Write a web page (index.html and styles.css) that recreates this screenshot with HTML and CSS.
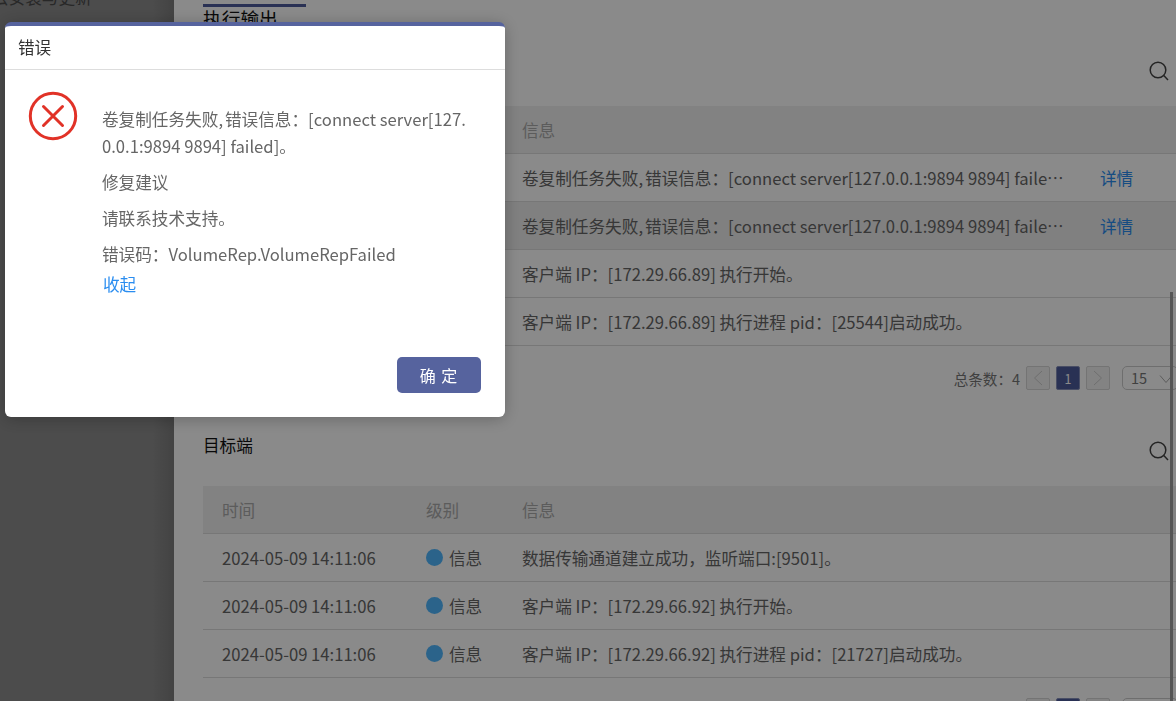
FILE: index.html
```html
<!DOCTYPE html>
<html lang="zh-CN">
<head>
	<meta charset="UTF-8">
	<title>执行输出</title>
	<link rel="stylesheet" href="styles.css">
</head>
<body>
	<div class="layout">
		<div class="side">
			<p class="side-item">云安装与更新</p>
		</div>
		<div class="main">
			<div class="tab">执行输出</div>

			<div class="sec-head">
				<span class="sec-title"></span>
				<svg class="search" width="20" height="20" viewBox="0 0 20 20"><circle cx="9" cy="9" r="7.8"/><path d="M14.8 14.6 L19 19"/></svg>
			</div>
			<table class="log">
				<colgroup><col class="c-time"><col class="c-level"><col class="c-info"><col></colgroup>
				<thead>
					<tr><th>时间</th><th>级别</th><th>信息</th><th></th></tr>
				</thead>
				<tbody>
					<tr>
						<td>2024-05-09 14:11:08</td>
						<td><span class="dot err"></span>错误</td>
						<td class="info">卷复制任务失败<span class="comma">,</span>错误信息：[connect server[127.0.0.1:9894 9894] failed]。</td>
						<td><a class="link">详情</a></td>
					</tr>
					<tr class="hover">
						<td>2024-05-09 14:11:08</td>
						<td><span class="dot err"></span>错误</td>
						<td class="info">卷复制任务失败<span class="comma">,</span>错误信息：[connect server[127.0.0.1:9894 9894] failed]。</td>
						<td><a class="link">详情</a></td>
					</tr>
					<tr>
						<td>2024-05-09 14:11:06</td>
						<td><span class="dot"></span>信息</td>
						<td class="info">客户端 IP：[172.29.66.89] 执行开始。</td>
						<td></td>
					</tr>
					<tr>
						<td>2024-05-09 14:11:06</td>
						<td><span class="dot"></span>信息</td>
						<td class="info">客户端 IP：[172.29.66.89] 执行进程 pid：[25544]启动成功。</td>
						<td></td>
					</tr>
				</tbody>
			</table>
			<div class="pager">
				<span class="total">总条数：4</span>
				<span class="pg"><svg width="10" height="16" viewBox="0 0 10 16"><path d="M9 1 L1.5 8 L9 15"/></svg></span>
				<span class="pg on">1</span>
				<span class="pg"><svg width="10" height="16" viewBox="0 0 10 16"><path d="M1 1 L8.5 8 L1 15"/></svg></span>
				<span class="size">15<svg width="14" height="8" viewBox="0 0 14 8"><path d="M1 0.5 L7 7.5 L13 0.5"/></svg></span>
			</div>

			<div class="sec-head">
				<span class="sec-title">目标端</span>
				<svg class="search" width="20" height="20" viewBox="0 0 20 20"><circle cx="9" cy="9" r="7.8"/><path d="M14.8 14.6 L19 19"/></svg>
			</div>
			<table class="log">
				<colgroup><col class="c-time"><col class="c-level"><col class="c-info"><col></colgroup>
				<thead>
					<tr><th>时间</th><th>级别</th><th>信息</th><th></th></tr>
				</thead>
				<tbody>
					<tr>
						<td>2024-05-09 14:11:06</td>
						<td><span class="dot"></span>信息</td>
						<td class="info">数据传输通道建立成功，监听端口:[9501]。</td>
						<td></td>
					</tr>
					<tr>
						<td>2024-05-09 14:11:06</td>
						<td><span class="dot"></span>信息</td>
						<td class="info">客户端 IP：[172.29.66.92] 执行开始。</td>
						<td></td>
					</tr>
					<tr>
						<td>2024-05-09 14:11:06</td>
						<td><span class="dot"></span>信息</td>
						<td class="info">客户端 IP：[172.29.66.92] 执行进程 pid：[21727]启动成功。</td>
						<td></td>
					</tr>
				</tbody>
			</table>
			<div class="pager">
				<span class="total">总条数：3</span>
				<span class="pg"><svg width="10" height="16" viewBox="0 0 10 16"><path d="M9 1 L1.5 8 L9 15"/></svg></span>
				<span class="pg on">1</span>
				<span class="pg"><svg width="10" height="16" viewBox="0 0 10 16"><path d="M1 1 L8.5 8 L1 15"/></svg></span>
				<span class="size">15<svg width="14" height="8" viewBox="0 0 14 8"><path d="M1 0.5 L7 7.5 L13 0.5"/></svg></span>
			</div>
			<div class="scrollbar"></div>
		</div>
	</div>

	<div class="mask"></div>

	<div class="dialog">
		<div class="dialog-head">错误</div>
		<div class="dialog-body">
			<svg class="err-icon" width="50" height="50" viewBox="0 0 50 50">
				<circle cx="25" cy="25" r="22.7"/>
				<path d="M15.5 15.5 L34.5 34.5 M34.5 15.5 L15.5 34.5"/>
			</svg>
			<div class="msg">
				<p>卷复制任务失败<span class="comma">,</span>错误信息：[connect server[127.0.0.1:9894 9894] failed]。</p>
				<p>修复建议</p>
				<p>请联系技术支持。</p>
				<p>错误码：VolumeRep.VolumeRepFailed</p>
				<a class="fold">收起</a>
			</div>
		</div>
		<div class="dialog-foot">
			<span class="btn">确 定</span>
		</div>
	</div>
</body>
</html>
```

FILE: styles.css
```css
* {
	margin: 0;
	padding: 0;
	box-sizing: border-box;
}
html,body {
	height: 100%;
	overflow: hidden;
}
body {
	background: #fff;
	color: #666;
	font-family: "Noto Sans CJK SC", "Noto Sans", sans-serif;
	font-size: 16.64px;
}
.comma {
	letter-spacing: 2px;
}
.layout {
	display: flex;
	height: 701px;
	overflow: hidden;
}
.side {
	flex: none;
	width: 174px;
	background: linear-gradient(to right, #8c8c8c 88%, #7c7c7c 100%);
}
.side-item {
	margin-top: -15px;
	text-indent: -8px;
	color: #4a4a4a;
	line-height: 24px;
	white-space: nowrap;
}
.main {
	position: relative;
	flex: 1;
	min-width: 0;
	padding: 4px 0 0 29px;
}
.tab {
	width: 103px;
	height: 42px;
	border-top: 3px solid #4f5b9c;
	color: #111;
	font-size: 18.72px;
	line-height: 22px;
}
.sec-head {
	display: flex;
	justify-content: space-between;
	height: 60px;
	padding-right: 7px;
}
.sec-title {
	color: #111;
	line-height: 38px;
}
.search {
	margin-top: 15px;
	fill: none;
	stroke: #444;
	stroke-width: 1.5;
}
.log {
	width: 100%;
	border-collapse: separate;
	border-spacing: 0;
	table-layout: fixed;
}
.c-time {
	width: 204px;
}
.c-level {
	width: 96px;
}
.c-info {
	width: 578px;
}
.log th {
	height: 48px;
	padding: 0 19px;
	background: #f0f0f0;
	border-bottom: 1px solid #dcdcdc;
	color: #aaa;
	font-weight: 400;
	text-align: left;
}
.log td {
	height: 48px;
	padding: 0 19px;
	border-bottom: 1px solid #dcdcdc;
	color: #666;
	white-space: nowrap;
}
.log .hover td {
	background: #ececec;
}
.log .info {
	overflow: hidden;
	padding-right: 16px;
	text-overflow: ellipsis;
}
.dot {
	display: inline-block;
	width: 17px;
	height: 17px;
	margin-right: 6px;
	border-radius: 50%;
	background: #50b8ff;
	vertical-align: -1px;
}
.dot.err {
	background: #e13227;
}
.link {
	color: #2a8df0;
}
.pager {
	display: flex;
	justify-content: flex-end;
	align-items: center;
	gap: 6px;
	height: 24px;
	margin: 20px -2px 36px 0;
}
.total {
	color: #777;
	font-size: 14.56px;
}
.pg {
	display: flex;
	justify-content: center;
	align-items: center;
	width: 24px;
	height: 24px;
	background: #f2f2f2;
	border: 1px solid #d6d6d6;
	border-radius: 2px;
	color: #fff;
	font-size: 12.5px;
}
.pg svg {
	fill: none;
	stroke: #ccc;
	stroke-width: 1;
}
.pg.on {
	background: #4c5c9c;
	border-color: #8790bb;
}
.size {
	display: flex;
	justify-content: space-between;
	align-items: center;
	width: 56px;
	height: 24px;
	margin-left: 6px;
	padding: 0 4px 2px 8px;
	border: 1px solid #ccc;
	border-radius: 5px;
	color: #777;
	font-size: 14.56px;
}
.size svg {
	fill: none;
	stroke: #aaa;
	stroke-width: 1;
	margin-top: 3px;
}
.scrollbar {
	position: absolute;
	top: 292px;
	right: 3px;
	bottom: 0;
	width: 3px;
	background: #9e9e9e;
}
.mask {
	position: fixed;
	top: 0;
	right: 0;
	bottom: 0;
	left: 0;
	background: rgba(0,0,0,.46);
}
.dialog {
	position: fixed;
	top: 22px;
	left: 5px;
	width: 500px;
	height: 395px;
	background: #fff;
	border-top: 4px solid #56639e;
	border-radius: 6px;
	box-shadow: 0 2px 16px rgba(0,0,0,.25);
}
.dialog-head {
	height: 44px;
	padding-left: 13px;
	border-bottom: 1px solid #ddd;
	color: #333;
	line-height: 43px;
}
.dialog-body {
	display: flex;
	height: 287px;
	padding: 22px 35px 0 23px;
}
.err-icon {
	flex: none;
	margin-top: -1px;
	fill: none;
	stroke: #e13227;
	stroke-width: 3;
}
.err-icon path {
	stroke-linecap: round;
}
.msg {
	flex: 1;
	padding: 14px 0 0 24px;
	line-height: 27px;
	word-break: break-all;
}
.msg p {
	margin-bottom: 9px;
}
.fold {
	display: block;
	margin: -6px 0 0 1px;
	color: #2a8df0;
}
.dialog-foot {
	display: flex;
	justify-content: flex-end;
	padding-right: 24px;
}
.btn {
	width: 84px;
	height: 36px;
	background: #56639e;
	border-radius: 5px;
	color: #fff;
	font-size: 16px;
	line-height: 36px;
	text-align: center;
	letter-spacing: 1px;
}
```
